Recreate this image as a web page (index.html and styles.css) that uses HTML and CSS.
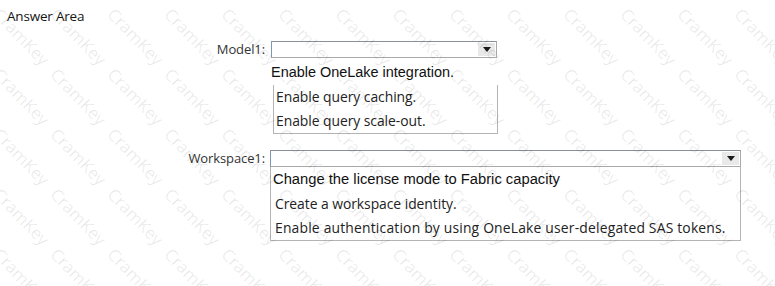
FILE: index.html
```html
<!DOCTYPE html>
<html lang="en">
<head>
<meta charset="utf-8">
<title>Answer Area</title>
<link rel="stylesheet" href="styles.css">
</head>
<body>
<div class="page">
  <h1 class="title">Answer Area</h1>
  <div class="form">
    <div class="label label-model">Model1:</div>
    <div class="control control-model">
      <div class="select"><span class="arrow-btn"><span class="arrow"></span></span></div>
      <div class="chosen">Enable OneLake integration.</div>
      <ul class="options">
        <li class="opt">Enable query caching.</li>
        <li class="opt">Enable query scale-out.</li>
      </ul>
    </div>
    <div class="label label-ws">Workspace1:</div>
    <div class="control control-ws">
      <div class="select"><span class="arrow-btn"><span class="arrow"></span></span></div>
      <ul class="options options-ws">
        <li class="opt opt-arial">Change the license mode to Fabric capacity</li>
        <li class="opt opt-mid">Create a workspace identity.</li>
        <li class="opt opt-long">Enable authentication by using OneLake user-delegated SAS tokens.</li>
      </ul>
    </div>
  </div>
  <div class="watermark" aria-hidden="true">
    <span>CramKey</span><span>CramKey</span><span>CramKey</span><span>CramKey</span><span>CramKey</span><span>CramKey</span><span>CramKey</span><span>CramKey</span><span>CramKey</span><span>CramKey</span><span>CramKey</span><span>CramKey</span><span>CramKey</span><span>CramKey</span>
    <span>CramKey</span><span>CramKey</span><span>CramKey</span><span>CramKey</span><span>CramKey</span><span>CramKey</span><span>CramKey</span><span>CramKey</span><span>CramKey</span><span>CramKey</span><span>CramKey</span><span>CramKey</span><span>CramKey</span><span>CramKey</span>
    <span>CramKey</span><span>CramKey</span><span>CramKey</span><span>CramKey</span><span>CramKey</span><span>CramKey</span><span>CramKey</span><span>CramKey</span><span>CramKey</span><span>CramKey</span><span>CramKey</span><span>CramKey</span><span>CramKey</span><span>CramKey</span>
    <span>CramKey</span><span>CramKey</span><span>CramKey</span><span>CramKey</span><span>CramKey</span><span>CramKey</span><span>CramKey</span><span>CramKey</span><span>CramKey</span><span>CramKey</span><span>CramKey</span><span>CramKey</span><span>CramKey</span><span>CramKey</span>
    <span>CramKey</span><span>CramKey</span><span>CramKey</span><span>CramKey</span><span>CramKey</span><span>CramKey</span><span>CramKey</span><span>CramKey</span><span>CramKey</span><span>CramKey</span><span>CramKey</span><span>CramKey</span><span>CramKey</span><span>CramKey</span>
  </div>
</div>
</body>
</html>
```

FILE: styles.css
```css
* { box-sizing: border-box; }
html, body { margin: 0; padding: 0; background: #fff; }
body { width: 775px; height: 286px; overflow: hidden; }

.page {
  position: relative;
  width: 775px;
  height: 286px;
  overflow: hidden;
  padding: 8px 0 0 7px;
  font-family: "Open Sans", "Noto Sans", sans-serif;
  color: #2b2b2b;
}

.title {
  margin: 0;
  font-size: 13.5px;
  font-weight: 400;
  line-height: 16px;
  color: #141414;
  letter-spacing: -0.2px;
}

.form {
  display: grid;
  grid-template-columns: 258px auto;
  column-gap: 5px;
  margin-top: 17px;
  align-items: start;
}

.label {
  text-align: right;
  font-size: 13px;
  line-height: 17px;
  color: #333;
  letter-spacing: -0.1px;
}
.label-ws { margin-top: 16px; }
.control-ws { margin-top: 16px; }

.select {
  height: 17px;
  border: 1px solid #a9a9a9;
  border-left-color: #8097b4;
  border-top-color: #8a8f98;
  display: flex;
  justify-content: flex-end;
  padding: 1px;
}
.control-model .select { width: 226px; margin-left: 1px; }
.control-ws .select { width: 471px; }

.arrow-btn {
  width: 17px;
  height: 13px;
  background: #e9e9e9;
  display: flex;
  align-items: center;
  justify-content: center;
}
.arrow {
  width: 0;
  height: 0;
  border-left: 4px solid transparent;
  border-right: 4px solid transparent;
  border-top: 5px solid #1a1a1a;
}

.chosen {
  font-family: "Liberation Sans", Arial, sans-serif;
  font-size: 14.45px;
  line-height: 18px;
  padding-top: 5px;
  margin-left: 1px;
  color: #111;
}

.options {
  list-style: none;
  margin: 0;
  padding: 0;
  border: 1px solid #b4b4b4;
  border-top: none;
}
.control-model .options {
  width: 225px;
  margin: 4px 0 0 3px;
}
.options-ws {
  width: 471px;
}

.opt {
  height: 24px;
  line-height: 24px;
  padding-left: 3px;
  font-size: 13.9px;
  color: #222;
  white-space: nowrap;
  letter-spacing: -0.05px;
}
.control-model .opt { padding-left: 2px; }
.options-ws .opt { padding-left: 4px; }
.options-ws .opt-mid { height: 25px; line-height: 25px; }
.options-ws .opt-long { letter-spacing: 0.18px; }
.options-ws .opt.opt-arial {
  font-family: "Liberation Sans", Arial, sans-serif;
  font-size: 14.75px;
  color: #111;
  padding-left: 2px;
  letter-spacing: 0;
}

.watermark {
  position: absolute;
  left: 3px;
  top: 5px;
  display: grid;
  grid-template-columns: repeat(14, 57px);
  grid-auto-rows: 60px;
  pointer-events: none;
}
.watermark span {
  display: block;
  font-family: "Open Sans", sans-serif;
  font-size: 17px;
  line-height: 17px;
  color: rgba(0, 0, 0, 0.09);
  transform-origin: 0 0;
  transform: rotate(46deg);
  white-space: nowrap;
}
```
